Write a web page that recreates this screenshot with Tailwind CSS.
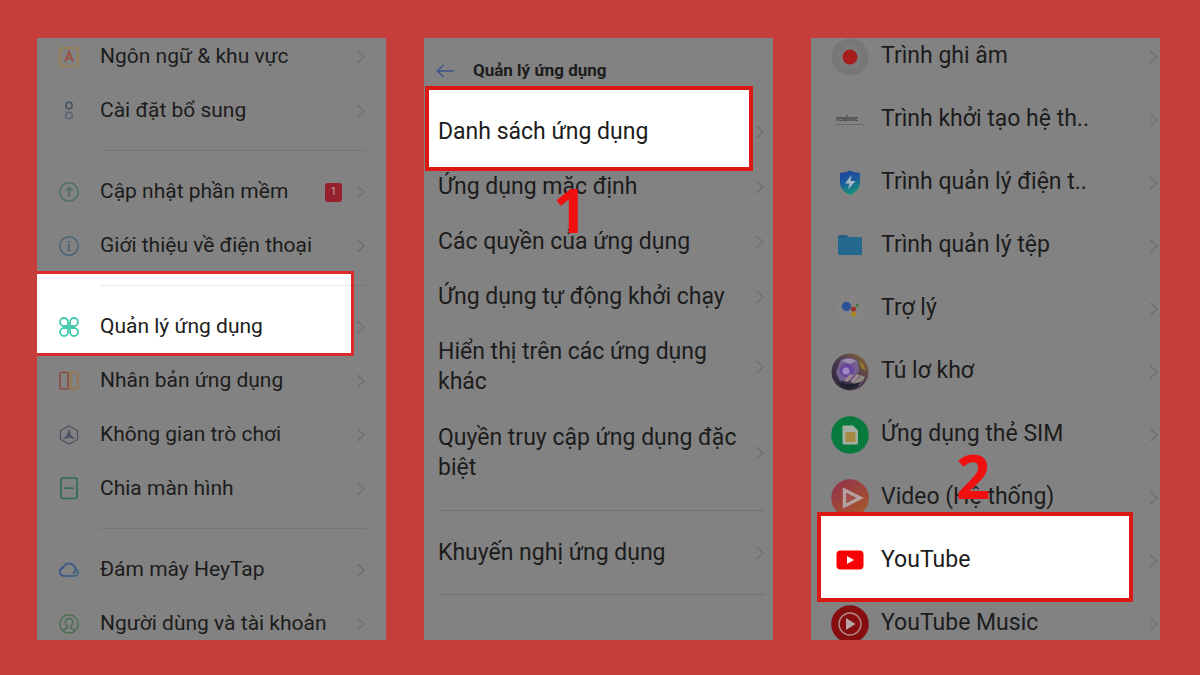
<!DOCTYPE html>
<html lang="vi">
	<head>
		<meta charset="UTF-8" />
		<meta name="viewport" content="width=device-width, initial-scale=1" />
		<title>Quản lý ứng dụng</title>
		<script src="https://cdn.jsdelivr.net/npm/@tailwindcss/browser@4"></script>
	</head>
	<body class="bg-[#c53e3b] font-['Roboto',sans-serif] text-[#1c1c1c]">
		<!-- shared icons -->
		<svg class="hidden">
			<symbol id="chevron" viewBox="0 0 10 16">
				<path d="M1.5 2 8 8l-6.500 6" fill="none" stroke="currentColor" stroke-width="1.5" />
			</symbol>
		</svg>

		<main class="grid grid-cols-3 gap-[38px] min-h-screen pl-[37px] pr-10 pt-[38px] pb-[35px]">
			<!-- Settings -->
			<section class="relative isolate overflow-hidden bg-[#828282] text-[21px]">
				<div class="absolute -z-10 -left-[3px] right-[32px] top-[233px] h-[85px] bg-white border-3 border-[#d92b2b]"></div>
				<ul class="-mt-2 -mb-3">
					<li>
						<a href="#" class="flex items-center h-[54px] pl-[22px] pr-5">
							<svg class="w-5 h-5 mr-[21px]" viewBox="0 0 20 20" fill="none">
								<rect x="1" y="1" width="18" height="18" rx="1.5" stroke="#9c7d48" stroke-width="1.6" />
								<path d="M6 14.5 10 5l4 9.5M7.5 11.5h5" stroke="#9a4a3e" stroke-width="1.7" />
							</svg>
							<span class="flex-1">Ngôn ngữ &amp; khu vực</span>
							<svg class="w-[10px] h-4 text-[#6f6f6f]"><use href="#chevron" /></svg>
						</a>
					</li>
					<li>
						<a href="#" class="flex items-center h-[54px] pl-[22px] pr-5">
							<svg class="w-5 h-5 mr-[21px]" viewBox="0 0 20 20" fill="none" stroke-width="1.5">
								<circle cx="10" cy="4.5" r="3.2" stroke="#465360" />
								<circle cx="10" cy="14.5" r="3.2" stroke="#5b6478" />
							</svg>
							<span class="flex-1">Cài đặt bổ sung</span>
							<svg class="w-[10px] h-4 text-[#6f6f6f]"><use href="#chevron" /></svg>
						</a>
					</li>
					<li class="h-px mt-3 mb-[14px] ml-[63px] mr-5 bg-black/8"></li>
					<li>
						<a href="#" class="flex items-center h-[54px] pl-[22px] pr-5">
							<svg class="w-5 h-5 mr-[21px]" viewBox="0 0 20 20" fill="none" stroke="#4b705d" stroke-width="1.5">
								<circle cx="10" cy="10" r="9.2" />
								<path d="M10 15V5.500M6.500 9 10 5.500 13.500 9" />
							</svg>
							<span class="flex-1">Cập nhật phần mềm</span>
							<span class="flex items-center justify-center w-[17px] h-[19px] mr-[14px] rounded-[3px] bg-[#96202b] text-[11px] text-[#c9a0a2]">1</span>
							<svg class="w-[10px] h-4 text-[#6f6f6f]"><use href="#chevron" /></svg>
						</a>
					</li>
					<li>
						<a href="#" class="flex items-center h-[54px] pl-[22px] pr-5">
							<svg class="w-5 h-5 mr-[21px]" viewBox="0 0 20 20" fill="none" stroke="#476374" stroke-width="1.5">
								<circle cx="10" cy="10" r="9.2" />
								<path d="M10 5v2M8.500 9H10v5.500M8.300 14.500h3.400" />
							</svg>
							<span class="flex-1">Giới thiệu về điện thoại</span>
							<svg class="w-[10px] h-4 text-[#6f6f6f]"><use href="#chevron" /></svg>
						</a>
					</li>
					<li class="h-px mt-3 mb-[14px] ml-[63px] mr-5 bg-black/8"></li>
					<li>
						<a href="#" class="flex items-center h-[54px] pl-[22px] pr-5">
							<svg class="w-5 h-5 mr-[21px]" viewBox="0 0 20 20" fill="none" stroke="#45c9ae" stroke-width="1.8">
								<path d="M9 9H5a4 4 0 1 1 4-4zM11 9V5a4 4 0 1 1 4 4zM9 11v4a4 4 0 1 1-4-4zM11 11h4a4 4 0 1 1-4 4z" />
							</svg>
							<span class="flex-1">Quản lý ứng dụng</span>
							<svg class="w-[10px] h-4 text-[#6f6f6f]"><use href="#chevron" /></svg>
						</a>
					</li>
					<li>
						<a href="#" class="flex items-center h-[54px] pl-[22px] pr-5">
							<svg class="w-5 h-5 mr-[21px]" viewBox="0 0 20 20" fill="none" stroke-width="1.6">
								<rect x="1" y="1.5" width="8" height="16.5" rx="1" stroke="#8a4c3f" />
								<path d="M11.500 1.500H17a2 2 0 0 1 2 2V16a2 2 0 0 1-2 2h-5.500z" stroke="#9b7548" />
							</svg>
							<span class="flex-1">Nhân bản ứng dụng</span>
							<svg class="w-[10px] h-4 text-[#6f6f6f]"><use href="#chevron" /></svg>
						</a>
					</li>
					<li>
						<a href="#" class="flex items-center h-[54px] pl-[22px] pr-5">
							<svg class="w-5 h-5 mr-[21px]" viewBox="0 0 20 20" fill="none" stroke="#4b5160" stroke-width="1.2">
								<path d="M10 1 18.5 5.5v9L10 19l-8.5-4.5v-9z" />
								<path d="M10 4.5 11.7 10 15.500 14 10 12.300 4.500 14 8.300 10z" fill="#4b5160" stroke-width=".6" />
							</svg>
							<span class="flex-1">Không gian trò chơi</span>
							<svg class="w-[10px] h-4 text-[#6f6f6f]"><use href="#chevron" /></svg>
						</a>
					</li>
					<li>
						<a href="#" class="flex items-center h-[54px] pl-[22px] pr-5">
							<svg class="w-5 h-6 mr-[21px]" viewBox="0 0 20 24" fill="none" stroke="#2f6b56" stroke-width="1.7">
								<rect x="2" y="1" width="16" height="20.5" rx="2" />
								<path d="M5.500 11.200h9" />
							</svg>
							<span class="flex-1">Chia màn hình</span>
							<svg class="w-[10px] h-4 text-[#6f6f6f]"><use href="#chevron" /></svg>
						</a>
					</li>
					<li class="h-px mt-3 mb-[14px] ml-[63px] mr-5 bg-black/8"></li>
					<li>
						<a href="#" class="flex items-center h-[54px] pl-[22px] pr-5">
							<svg class="w-5 h-5 mr-[21px]" viewBox="0 0 20 20" fill="none" stroke="#3b5488" stroke-width="1.7">
								<path d="M15 16H5a4.200 4.200 0 0 1-.8-8.300 6.300 6.300 0 0 1 12.200 1.500c0 1.800-.8 3.300-2 4.600" />
								<path d="M16.500 9a3.600 3.600 0 0 1-.5 7h-3" stroke="#3d6a86" />
							</svg>
							<span class="flex-1">Đám mây HeyTap</span>
							<svg class="w-[10px] h-4 text-[#6f6f6f]"><use href="#chevron" /></svg>
						</a>
					</li>
					<li>
						<a href="#" class="flex items-center h-[54px] pl-[22px] pr-5">
							<svg class="w-5 h-5 mr-[21px]" viewBox="0 0 20 20" fill="none" stroke="#4a6f50" stroke-width="1.4">
								<circle cx="10" cy="10" r="9.2" />
								<path d="M4 16.500c1-1.500 2.500-2 4.300-2.500v-1.500C6.800 11.500 6.300 10 6.300 8.300 6.300 6 7.800 4.500 10 4.500s3.700 1.500 3.700 3.800c0 1.700-.5 3.200-2 4.200V14c1.800.5 3.300 1 4.300 2.500" />
							</svg>
							<span class="flex-1">Người dùng và tài khoản</span>
							<svg class="w-[10px] h-4 text-[#6f6f6f]"><use href="#chevron" /></svg>
						</a>
					</li>
				</ul>
			</section>

			<!-- App management -->
			<section class="relative isolate overflow-hidden bg-[#828282] text-[23px]">
				<div class="absolute -z-10 left-px right-5 top-[48px] h-[85px] bg-white border-4 border-[#dc1815]"></div>
				<header class="flex items-center h-[66px] pl-3">
					<button type="button" aria-label="Quay lại">
						<svg class="w-[18px] h-4 mr-[19px]" viewBox="0 0 18 16" fill="none" stroke="#3c5488" stroke-width="1.5">
							<path d="M18 8H1.500M7.500 2l-6 6 6 6" />
						</svg>
					</button>
					<h1 class="text-[17px] font-bold">Quản lý ứng dụng</h1>
				</header>
				<ul class="leading-[30px]">
					<li>
						<a href="#" class="flex items-center min-h-[55px] gap-5 pl-[14px] pr-2">
							<span class="flex-1">Danh sách ứng dụng</span>
							<svg class="w-[10px] h-4 text-[#6f6f6f]"><use href="#chevron" /></svg>
						</a>
					</li>
					<li>
						<a href="#" class="flex items-center min-h-[55px] gap-5 pl-[14px] pr-2">
							<span class="flex-1">Ứng dụng mặc định</span>
							<svg class="w-[10px] h-4 text-[#6f6f6f]"><use href="#chevron" /></svg>
						</a>
					</li>
					<li>
						<a href="#" class="flex items-center min-h-[55px] gap-5 pl-[14px] pr-2">
							<span class="flex-1">Các quyền của ứng dụng</span>
							<svg class="w-[10px] h-4 text-[#6f6f6f]"><use href="#chevron" /></svg>
						</a>
					</li>
					<li>
						<a href="#" class="flex items-center min-h-[55px] gap-5 pl-[14px] pr-2">
							<span class="flex-1">Ứng dụng tự động khởi chạy</span>
							<svg class="w-[10px] h-4 text-[#6f6f6f]"><use href="#chevron" /></svg>
						</a>
					</li>
					<li>
						<a href="#" class="flex items-center min-h-[55px] gap-4 py-[13px] pl-[14px] pr-2">
							<span class="flex-1">Hiển thị trên các ứng dụng khác</span>
							<svg class="w-[10px] h-4 text-[#6f6f6f]"><use href="#chevron" /></svg>
						</a>
					</li>
					<li>
						<a href="#" class="flex items-center min-h-[55px] gap-4 py-[13px] pl-[14px] pr-2">
							<span class="flex-1">Quyền truy cập ứng dụng đặc biệt</span>
							<svg class="w-[10px] h-4 text-[#6f6f6f]"><use href="#chevron" /></svg>
						</a>
					</li>
					<li class="h-px my-[14px] ml-[14px] mr-2 bg-black/12"></li>
					<li>
						<a href="#" class="flex items-center min-h-[55px] gap-5 pl-[14px] pr-2">
							<span class="flex-1">Khuyến nghị ứng dụng</span>
							<svg class="w-[10px] h-4 text-[#6f6f6f]"><use href="#chevron" /></svg>
						</a>
					</li>
					<li class="h-px my-[14px] ml-[14px] mr-2 bg-black/12"></li>
				</ul>
				<span class="absolute left-[129px] top-[142px] font-['Open_Sans',sans-serif] font-bold text-[60px] leading-none text-[#f01010]">1</span>
			</section>

			<!-- App list -->
			<section class="relative isolate overflow-hidden bg-[#828282] text-[23px]">
				<div class="absolute z-10 left-[6px] right-[27px] top-[474px] h-[90px] bg-white border-4 border-[#dc1815]"></div>
				<ul class="-mt-[13px] -mb-4">
					<li>
						<a href="#" class="flex items-center h-[63px] pl-5 pr-px">
							<svg class="w-[38px] h-[38px] mr-3" viewBox="0 0 38 38">
								<circle cx="19" cy="19" r="18.5" fill="#777" />
								<circle cx="19" cy="19" r="12" fill="#7a7a7a" />
								<circle cx="19" cy="19" r="7.5" fill="#a51d1d" />
							</svg>
							<span class="flex-1">Trình ghi âm</span>
							<svg class="w-[10px] h-4 text-[#6f6f6f]"><use href="#chevron" /></svg>
						</a>
					</li>
					<li>
						<a href="#" class="flex items-center h-[63px] pl-5 pr-px">
							<span class="flex justify-center w-[38px] mr-3">
								<span class="w-7 border-b border-[#6a6a6a] text-[7px] leading-[9px] font-bold text-[#3f3f3f]">realme</span>
							</span>
							<span class="flex-1">Trình khởi tạo hệ th..</span>
							<svg class="w-[10px] h-4 text-[#6f6f6f]"><use href="#chevron" /></svg>
						</a>
					</li>
					<li>
						<a href="#" class="flex items-center h-[63px] pl-5 pr-px">
							<svg class="w-[38px] h-[38px] mr-3" viewBox="0 0 38 38">
								<defs>
									<linearGradient id="shield" x1="0" y1="0" x2=".3" y2="1">
										<stop offset="0" stop-color="#1d3f9a" />
										<stop offset=".5" stop-color="#1c5a9c" />
										<stop offset="1" stop-color="#16907e" />
									</linearGradient>
								</defs>
								<path d="M19 6.500c3 1.500 6.500 2 10 2.500v9c0 6-4 10.500-10 13-6-2.500-10-7-10-13V9c3.500-.5 7-1 10-2.500z" fill="url(#shield)" />
								<path d="M20.500 11 14 19.500h4.500L17 25.500l7.500-8.500h-5z" fill="#a9b9c4" />
							</svg>
							<span class="flex-1">Trình quản lý điện t..</span>
							<svg class="w-[10px] h-4 text-[#6f6f6f]"><use href="#chevron" /></svg>
						</a>
					</li>
					<li>
						<a href="#" class="flex items-center h-[63px] pl-5 pr-px">
							<svg class="w-[38px] h-[38px] mr-3" viewBox="0 0 38 38">
								<path d="M7 10a1.500 1.500 0 0 1 1.500-1.500h7L18 10H29.500A1.500 1.500 0 0 1 31 11.500V26.500A1.500 1.500 0 0 1 29.500 28h-21A1.500 1.500 0 0 1 7 26.500z" fill="#25688d" />
								<path d="M7 10a1.500 1.500 0 0 1 1.500-1.500h7L18 10z" fill="#1d5777" />
							</svg>
							<span class="flex-1">Trình quản lý tệp</span>
							<svg class="w-[10px] h-4 text-[#6f6f6f]"><use href="#chevron" /></svg>
						</a>
					</li>
					<li>
						<a href="#" class="flex items-center h-[63px] pl-5 pr-px">
							<svg class="w-[38px] h-[38px] mr-3" viewBox="0 0 38 38">
								<circle cx="19" cy="19" r="15" fill="#848484" />
								<circle cx="15.5" cy="16.5" r="4.7" fill="#2c5296" />
								<circle cx="22.5" cy="19" r="2.5" fill="#9c3028" />
								<circle cx="26" cy="15.5" r="1.4" fill="#3b7445" />
								<circle cx="22.8" cy="24" r="2.6" fill="#a98322" />
							</svg>
							<span class="flex-1">Trợ lý</span>
							<svg class="w-[10px] h-4 text-[#6f6f6f]"><use href="#chevron" /></svg>
						</a>
					</li>
					<li>
						<a href="#" class="flex items-center h-[63px] pl-5 pr-px">
							<svg class="w-[38px] h-[38px] mr-3" viewBox="0 0 38 38">
								<defs>
									<linearGradient id="poker" x1="0" y1="1" x2="1" y2="0">
										<stop offset="0" stop-color="#252638" />
										<stop offset=".5" stop-color="#4a3850" />
										<stop offset="1" stop-color="#8a6a35" />
									</linearGradient>
								</defs>
								<circle cx="19" cy="19" r="18.5" fill="url(#poker)" />
								<path d="M9 8c5-5 14-4 18 1l1 9-7 9-12 1-4-8z" fill="#75618f" />
								<path d="M11 8c4-3 10-3 14 0l-6 3z" fill="#9b8dab" />
								<circle cx="16" cy="17.5" r="7" fill="#68469a" />
								<circle cx="15" cy="18" r="3.5" fill="#9f87c0" />
								<path d="m13 28 6-7 3 1-5 7zm6 1 7-8 3 1-6 8z" fill="#9d8790" />
								<path d="m22 31 8-9 4 2-5 8z" fill="#8c8780" />
								<path d="M28 7c4 3 6 7 6.500 11l-4-3z" fill="#94782e" />
								<path d="M7 29c8 3 17 3 24-1-3 5-8 8-13 8-4 0-8-2-11-7z" fill="#1f2230" />
							</svg>
							<span class="flex-1">Tú lơ khơ</span>
							<svg class="w-[10px] h-4 text-[#6f6f6f]"><use href="#chevron" /></svg>
						</a>
					</li>
					<li>
						<a href="#" class="flex items-center h-[63px] pl-5 pr-px">
							<svg class="w-[38px] h-[38px] mr-3" viewBox="0 0 38 38">
								<circle cx="19" cy="19" r="18.8" fill="#087a3d" />
								<path d="M12 9.500h10l5 5V27a1.500 1.500 0 0 1-1.500 1.500h-13A1.500 1.500 0 0 1 11.500 27V10z" fill="#a3ada3" />
								<rect x="14.5" y="16" width="10" height="10" rx="1" fill="#a48a43" />
							</svg>
							<span class="flex-1">Ứng dụng thẻ SIM</span>
							<svg class="w-[10px] h-4 text-[#6f6f6f]"><use href="#chevron" /></svg>
						</a>
					</li>
					<li>
						<a href="#" class="flex items-center h-[63px] pl-5 pr-px">
							<svg class="w-[38px] h-[38px] mr-3" viewBox="0 0 38 38">
								<defs>
									<linearGradient id="video" x1="0" y1="0" x2=".7" y2="1">
										<stop offset="0" stop-color="#93304f" />
										<stop offset="1" stop-color="#a5552a" />
									</linearGradient>
								</defs>
								<circle cx="19" cy="19" r="18.8" fill="url(#video)" />
								<path d="M13.500 11v16L29 19z" fill="none" stroke="#b3a09f" stroke-width="3.5" />
								<path d="M16 15.500v7l6.500-3.500z" fill="#a34f4a" />
							</svg>
							<span class="flex-1">Video (Hệ thống)</span>
							<svg class="w-[10px] h-4 text-[#6f6f6f]"><use href="#chevron" /></svg>
						</a>
					</li>
					<li class="relative z-20">
						<a href="#" class="flex items-center h-[63px] pl-5 pr-px">
							<svg class="w-[38px] h-[38px] mr-3" viewBox="0 0 38 38">
								<rect x="5.5" y="8.5" width="27" height="19" rx="4" fill="#fb0007" />
								<path d="M16 14v8l7-4z" fill="#fff" />
							</svg>
							<span class="flex-1">YouTube</span>
							<svg class="w-[10px] h-4 text-[#6f6f6f]"><use href="#chevron" /></svg>
						</a>
					</li>
					<li>
						<a href="#" class="flex items-center h-[63px] pl-5 pr-px">
							<svg class="w-[38px] h-[38px] mr-3" viewBox="0 0 38 38">
								<circle cx="19" cy="19" r="18.8" fill="#860d10" />
								<circle cx="19" cy="19" r="11" fill="none" stroke="#b08a8a" stroke-width="1.4" />
								<path d="M15 13v12l9.500-6z" fill="#b5a5a5" />
							</svg>
							<span class="flex-1">YouTube Music</span>
							<svg class="w-[10px] h-4 text-[#6f6f6f]"><use href="#chevron" /></svg>
						</a>
					</li>
				</ul>
				<span class="absolute left-[145px] top-[408px] font-['Open_Sans',sans-serif] font-bold text-[60px] leading-none text-[#f01010]">2</span>
			</section>
		</main>
	</body>
</html>
